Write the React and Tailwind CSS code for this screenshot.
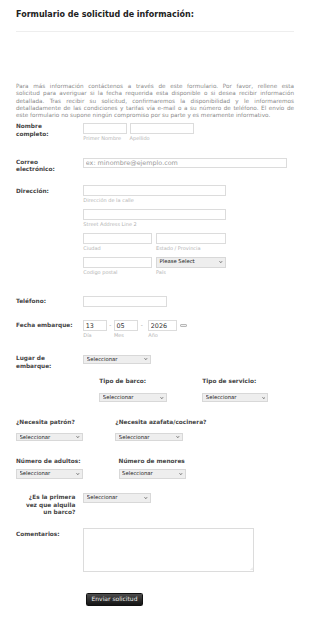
import { useState } from 'react';

const label = "text-[5.8px] font-bold leading-[7.5px] text-[#444]";
const sub = "mt-[1.5px] text-[5px] leading-[6px] text-[#b4b4b4] whitespace-nowrap";
const box = "block h-[10.5px] border border-[#dcdcdc] bg-white px-[1.5px] text-[6.4px] text-[#333] placeholder:text-[#9a9a9a] outline-none";

function Chevron() {
  return (
    <svg width="3.6" height="2.2" viewBox="0 0 6 4" className="pointer-events-none absolute right-[3px] top-1/2 -translate-y-1/2">
      <polyline points="0.8,0.8 3,3 5.2,0.8" fill="none" stroke="#333" strokeWidth="1.4" />
    </svg>
  );
}

function Select({ className = '', children = 'Seleccionar' }) {
  return (
    <div className={`relative ${className}`}>
      <select className="block h-full w-full appearance-none border border-[#d8d8d8] bg-[#eeeeee] pl-[2.5px] text-[5.3px] text-[#222] outline-none">
        <option>{children}</option>
      </select>
      <Chevron />
    </div>
  );
}

const PARA = [
  'Para más información contáctenos a través de este formulario. Por favor, rellene esta',
  'solicitud para averiguar si la fecha requerida esta disponible o si desea recibir información',
  'detallada. Tras recibir su solicitud, confirmaremos la disponibilidad y le informaremos',
  'detalladamente de las condiciones y tarifas vía e-mail o a su número de teléfono. El envío de',
];

export default function App() {
  const [fecha, setFecha] = useState({ d: '13', m: '05', y: '2026' });

  return (
    <div className="min-h-screen bg-white px-[16px] pt-[10px] font-['DejaVu_Sans',Verdana,sans-serif]">
      <h1 className="text-[8px] font-bold leading-[10px] text-[#222]">Formulario de solicitud de información:</h1>
      <div className="mt-[10.5px] h-px bg-[#eeeeee]" />

      {/* Intro */}
      <div className="mt-[51.5px] text-[5.7px] leading-[7.33px] text-[#8a8a8a]">
        {PARA.map(l => (
          <div key={l} className="text-justify [text-align-last:justify]">{l}</div>
        ))}
        <div>este formulario no supone ningún compromiso por su parte y es meramente informativo.</div>
      </div>

      {/* Nombre */}
      <div className="mt-[3.8px] flex items-start">
        <div className={`w-[67.3px] shrink-0 ${label}`}>Nombre<br />completo:</div>
        <div className="flex gap-[2.3px]">
          <div>
            <input className={`${box} w-[44px]`} />
            <div className={sub}>Primer Nombre</div>
          </div>
          <div>
            <input className={`${box} w-[64px]`} />
            <div className={sub}>Apellido</div>
          </div>
        </div>
      </div>

      {/* Correo */}
      <div className="mt-[16.3px] flex items-start">
        <div className={`w-[67.3px] shrink-0 pt-[1.2px] ${label}`}>Correo<br />electrónico:</div>
        <input className={`${box} h-[10px] w-[204px]`} placeholder="ex: minombre@ejemplo.com" />
      </div>

      {/* Dirección */}
      <div className="mt-[11.2px] flex items-start">
        <div className={`w-[67.3px] shrink-0 pt-[2.8px] ${label}`}>Dirección:</div>
        <div className="flex flex-col gap-[6px]">
          <div>
            <input className={`${box} w-[142.4px]`} />
            <div className={sub}>Dirección de la calle</div>
          </div>
          <div>
            <input className={`${box} w-[142.4px]`} />
            <div className={sub}>Street Address Line 2</div>
          </div>
          <div className="flex gap-[3.7px]">
            <div>
              <input className={`${box} w-[69px]`} />
              <div className={sub}>Ciudad</div>
            </div>
            <div>
              <input className={`${box} w-[69.7px]`} />
              <div className={sub}>Estado / Provincia</div>
            </div>
          </div>
          <div className="flex gap-[3.7px]">
            <div>
              <input className={`${box} w-[69px]`} />
              <div className={sub}>Codigo postal</div>
            </div>
            <div>
              <Select className="h-[10.5px] w-[69.7px]">Please Select</Select>
              <div className={sub}>País</div>
            </div>
          </div>
        </div>
      </div>

      {/* Teléfono */}
      <div className="mt-[21px] flex items-start">
        <div className={`w-[67.3px] shrink-0 pt-[2.2px] ${label}`}>Teléfono:</div>
        <input className={`${box} w-[84px]`} />
      </div>

      {/* Fecha */}
      <div className="mt-[13.8px] flex items-start">
        <div className={`w-[67.3px] shrink-0 pt-[2px] ${label}`}>Fecha embarque:</div>
        <div className="flex items-start">
          <div>
            <input className={`${box} w-[23.4px]`} value={fecha.d} onChange={e => setFecha({ ...fecha, d: e.target.value })} />
            <div className={sub}>Día</div>
          </div>
          <span className="w-[7.3px] text-center text-[5.5px] leading-[10.5px] text-[#999]">-</span>
          <div>
            <input className={`${box} w-[23.7px]`} value={fecha.m} onChange={e => setFecha({ ...fecha, m: e.target.value })} />
            <div className={sub}>Mes</div>
          </div>
          <span className="w-[10.6px] pl-[3px] text-[5.5px] leading-[10.5px] text-[#999]">-</span>
          <div>
            <input className={`${box} w-[29px]`} value={fecha.y} onChange={e => setFecha({ ...fecha, y: e.target.value })} />
            <div className={sub}>Año</div>
          </div>
          <div className="ml-[2.7px] mt-[4px] h-[2.6px] w-[7.5px] rounded-[1px] border border-[#b8b8b8] bg-[#f2f2f2]" />
        </div>
      </div>

      {/* Lugar */}
      <div className="mt-[16.7px] flex items-start">
        <div className={`w-[67.3px] shrink-0 ${label}`}>Lugar de<br />embarque:</div>
        <Select className="h-[8.6px] w-[67.4px]" />
      </div>

      {/* Tipo */}
      <div className="ml-[83.3px] mt-[8.3px] flex">
        <div className="w-[103px]">
          <div className={label}>Tipo de barco:</div>
          <Select className="mt-[7.5px] h-[8.7px] w-[67.4px]" />
        </div>
        <div>
          <div className={label}>Tipo de servicio:</div>
          <Select className="mt-[7.5px] h-[8.7px] w-[66px]" />
        </div>
      </div>

      {/* Necesita */}
      <div className="mt-[16.8px] flex">
        <div className="w-[99.3px]">
          <div className={label}>¿Necesita patrón?</div>
          <Select className="mt-[6.3px] h-[8.4px] w-[67px]" />
        </div>
        <div>
          <div className={label}>¿Necesita azafata/cocinera?</div>
          <Select className="mt-[6.3px] h-[8.4px] w-[67.7px]" />
        </div>
      </div>

      {/* Adultos */}
      <div className="mt-[16.8px] flex">
        <div className="w-[102.6px]">
          <div className={label}>Número de adultos:</div>
          <Select className="mt-[4px] h-[9.3px] w-[67px]" />
        </div>
        <div>
          <div className={label}>Número de menores</div>
          <Select className="mt-[4px] h-[9.3px] w-[67px]" />
        </div>
      </div>

      {/* Primera vez */}
      <div className="mt-[14.4px] flex items-start">
        <div className={`w-[67.3px] shrink-0 pr-[8px] pt-[1.3px] text-right ${label}`}>¿Es la primera<br />vez que alquila<br />un barco?</div>
        <Select className="h-[9.6px] w-[67.4px]" />
      </div>

      {/* Comentarios */}
      <div className="mt-[11.2px] flex items-start">
        <div className={`w-[67.3px] shrink-0 pt-[2.5px] ${label}`}>Comentarios:</div>
        <div className="relative">
          <textarea className="block h-[43.6px] w-[171px] resize-none border border-[#dcdcdc] bg-white p-[1.5px] text-[6.4px] outline-none" />
          <svg width="3" height="3" viewBox="0 0 6 6" className="pointer-events-none absolute bottom-[1.5px] right-[1.5px]">
            <line x1="6" y1="1" x2="1" y2="6" stroke="#bbb" strokeWidth="0.8" />
            <line x1="6" y1="3.5" x2="3.5" y2="6" stroke="#bbb" strokeWidth="0.8" />
          </svg>
        </div>
      </div>

      {/* Enviar */}
      <button className="ml-[69.7px] mt-[21px] block h-[13.4px] w-[57.6px] rounded-[1.5px] border border-[#111] bg-linear-to-b from-[#4d4d4d] to-[#141414] text-[6px] leading-none text-[#eee]">
        Enviar solicitud
      </button>
      <div className="h-[13px]" />
    </div>
  );
}
